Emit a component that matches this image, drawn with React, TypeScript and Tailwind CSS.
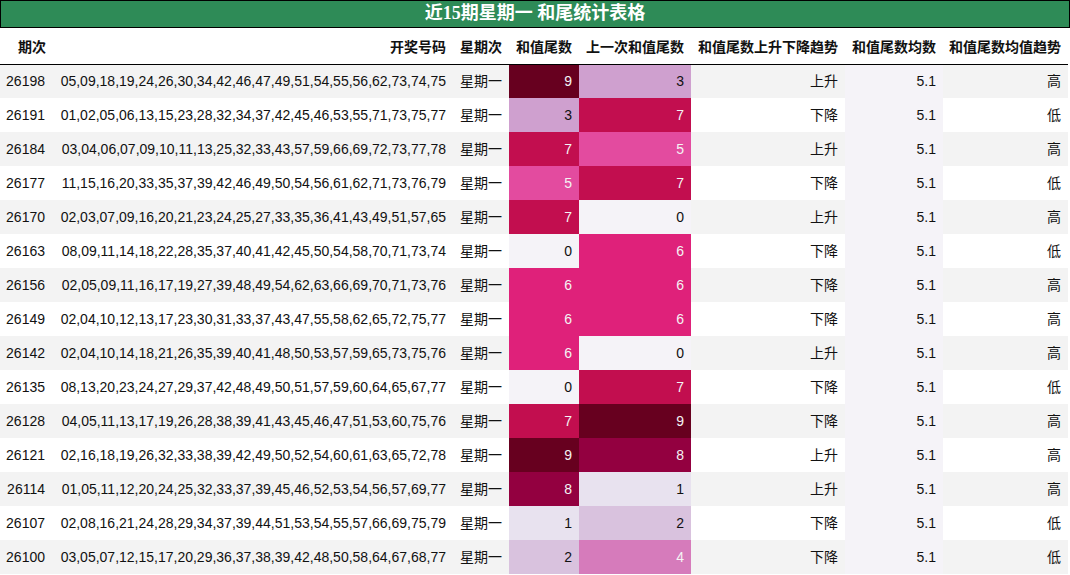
const ROWS: [string, string, number, number, string, string][] = [
  ['26198', '05,09,18,19,24,26,30,34,42,46,47,49,51,54,55,56,62,73,74,75', 9, 3, '上升', '高'],
  ['26191', '01,02,05,06,13,15,23,28,32,34,37,42,45,46,53,55,71,73,75,77', 3, 7, '下降', '低'],
  ['26184', '03,04,06,07,09,10,11,13,25,32,33,43,57,59,66,69,72,73,77,78', 7, 5, '上升', '高'],
  ['26177', '11,15,16,20,33,35,37,39,42,46,49,50,54,56,61,62,71,73,76,79', 5, 7, '下降', '低'],
  ['26170', '02,03,07,09,16,20,21,23,24,25,27,33,35,36,41,43,49,51,57,65', 7, 0, '上升', '高'],
  ['26163', '08,09,11,14,18,22,28,35,37,40,41,42,45,50,54,58,70,71,73,74', 0, 6, '下降', '低'],
  ['26156', '02,05,09,11,16,17,19,27,39,48,49,54,62,63,66,69,70,71,73,76', 6, 6, '下降', '高'],
  ['26149', '02,04,10,12,13,17,23,30,31,33,37,43,47,55,58,62,65,72,75,77', 6, 6, '下降', '高'],
  ['26142', '02,04,10,14,18,21,26,35,39,40,41,48,50,53,57,59,65,73,75,76', 6, 0, '上升', '高'],
  ['26135', '08,13,20,23,24,27,29,37,42,48,49,50,51,57,59,60,64,65,67,77', 0, 7, '下降', '低'],
  ['26128', '04,05,11,13,17,19,26,28,38,39,41,43,45,46,47,51,53,60,75,76', 7, 9, '下降', '高'],
  ['26121', '02,16,18,19,26,32,33,38,39,42,49,50,52,54,60,61,63,65,72,78', 9, 8, '上升', '高'],
  ['26114', '01,05,11,12,20,24,25,32,33,37,39,45,46,52,53,54,56,57,69,77', 8, 1, '上升', '高'],
  ['26107', '02,08,16,21,24,28,29,34,37,39,44,51,53,54,55,57,66,69,75,79', 1, 2, '下降', '低'],
  ['26100', '03,05,07,12,15,17,20,29,36,37,38,39,42,48,50,58,64,67,68,77', 2, 4, '下降', '低'],
];

// PuRd scale, 0..9
const HEAT: string[] = [
  'bg-[#f5f3f8] text-[#111]',
  'bg-[#e8e2ef] text-[#111]',
  'bg-[#d9c2de] text-[#111]',
  'bg-[#cfa0cf] text-[#111]',
  'bg-[#d67bbb] text-[#f4f4f4]',
  'bg-[#e34b9f] text-[#f4f4f4]',
  'bg-[#df217a] text-[#f4f4f4]',
  'bg-[#c20e4f] text-[#f4f4f4]',
  'bg-[#930040] text-[#f4f4f4]',
  'bg-[#67001f] text-[#f4f4f4]',
];

const HEADERS = ['期次', '开奖号码', '星期次', '和值尾数', '上一次和值尾数', '和值尾数上升下降趋势', '和值尾数均数', '和值尾数均值趋势'];
const WIDTHS = ['w-[53px]', 'w-[400px]', 'w-[56px]', 'w-[70px]', 'w-[112px]', 'w-[154px]', 'w-[98px]', 'w-[125px]'];

export default function App() {
  return (
    <div className="w-[1070px] h-[575px] overflow-hidden bg-white text-[14px] text-[#111]"
      style={{ fontFamily: '"Liberation Sans", "Noto Sans CJK SC", sans-serif' }}>
      <div
        className="h-[28px] border border-black bg-[#2e8b57] text-white font-bold text-[18px] leading-[25px] text-center"
        style={{ fontFamily: '"Liberation Serif", "Noto Sans CJK SC", serif' }}
      >
        近15期星期一 和尾统计表格
      </div>
      <table className="table-fixed border-collapse w-[1068px]">
        <colgroup>
          {WIDTHS.map((w, i) => <col key={i} className={w} />)}
        </colgroup>
        <thead>
          <tr className="h-[36px] border-b border-black">
            {HEADERS.map(h => (
              <th key={h} className="text-right font-bold pr-[7px] pt-[3px] whitespace-nowrap">{h}</th>
            ))}
          </tr>
        </thead>
        <tbody>
          {ROWS.map(([id, nums, cur, prev, trend, level], i) => {
            const stripe = i % 2 === 0 ? 'bg-[#f3f3f3]' : 'bg-white';
            return (
              <tr key={id} className="h-[34px]">
                <td className={cn(stripe, 'text-right pr-[8px]')}>{id}</td>
                <td className={cn(stripe, 'text-right pr-[7px] whitespace-nowrap')}>{nums}</td>
                <td className={cn(stripe, 'text-right pr-[7px]')}>星期一</td>
                <td className={cn(HEAT[cur], 'text-right pr-[7px]')}>{cur}</td>
                <td className={cn(HEAT[prev], 'text-right pr-[7px]')}>{prev}</td>
                <td className={cn(stripe, 'text-right pr-[7px]')}>{trend}</td>
                <td className="bg-[#f5f3f8] text-right pr-[7px]">5.1</td>
                <td className={cn(stripe, 'text-right pr-[7px]')}>{level}</td>
              </tr>
            );
          })}
        </tbody>
      </table>
    </div>
  );
}

function cn(...parts: string[]) {
  return parts.join(' ');
}
